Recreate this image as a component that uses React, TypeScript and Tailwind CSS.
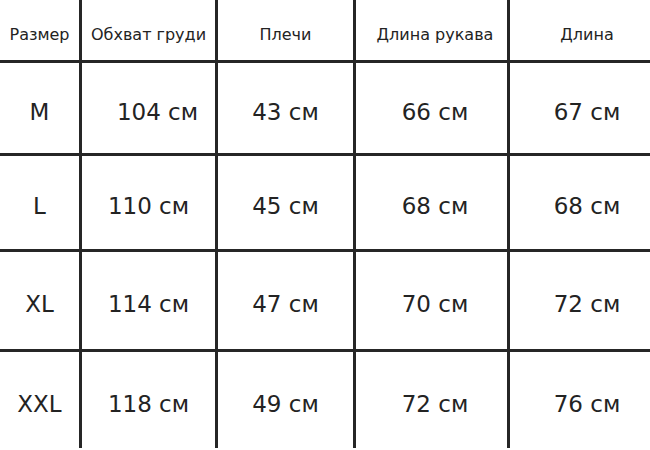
const headers = ["Размер", "Обхват груди", "Плечи", "Длина рукава", "Длина"];

const rows = [
  { h: "h-[93px]", cells: ["M", "104 см", "43 см", "66 см", "67 см"] },
  { h: "h-[96px]", cells: ["L", "110 см", "45 см", "68 см", "68 см"] },
  { h: "h-[100px]", cells: ["XL", "114 см", "47 см", "70 см", "72 см"] },
  { h: "h-[96px]", cells: ["XXL", "118 см", "49 см", "72 см", "76 см"] },
];

// widths include the 3px right rule
const cols = [
  "w-[82px] border-r-[3px]",
  "w-[136px] border-r-[3px]",
  "w-[138px] border-r-[3px]",
  "w-[154px] border-r-[3px] pl-[7px]",
  "w-[140px] pl-[14px]",
];

function Cell({ col, text, extra }: { col: number; text: string; extra?: string }) {
  return (
    <div
      className={`${cols[col]} ${extra ?? ""} h-full shrink-0 flex items-center justify-center border-[#262626] whitespace-nowrap`}
    >
      {text}
    </div>
  );
}

export default function App() {
  return (
    <div
      className="w-[650px] h-[450px] bg-white text-[#232323] overflow-hidden"
      style={{ fontFamily: '"DejaVu Sans", sans-serif' }}
    >
      <div className="flex h-[63px] border-b-[3px] border-[#262626] text-[16px]">
        {headers.map((t, i) => (
          <Cell key={t} col={i} text={t} extra="pt-[9px]" />
        ))}
      </div>
      {rows.map((r, ri) => (
        <div
          key={r.cells[0]}
          className={`flex ${r.h} ${ri < rows.length - 1 ? "border-b-[3px]" : ""} border-[#262626] text-[23px]`}
        >
          {r.cells.map((t, i) => (
            <Cell key={i} col={i} text={t} extra={ri === 0 && i === 1 ? "pt-[8px] pl-[18px]" : "pt-[8px]"} />
          ))}
        </div>
      ))}
    </div>
  );
}
